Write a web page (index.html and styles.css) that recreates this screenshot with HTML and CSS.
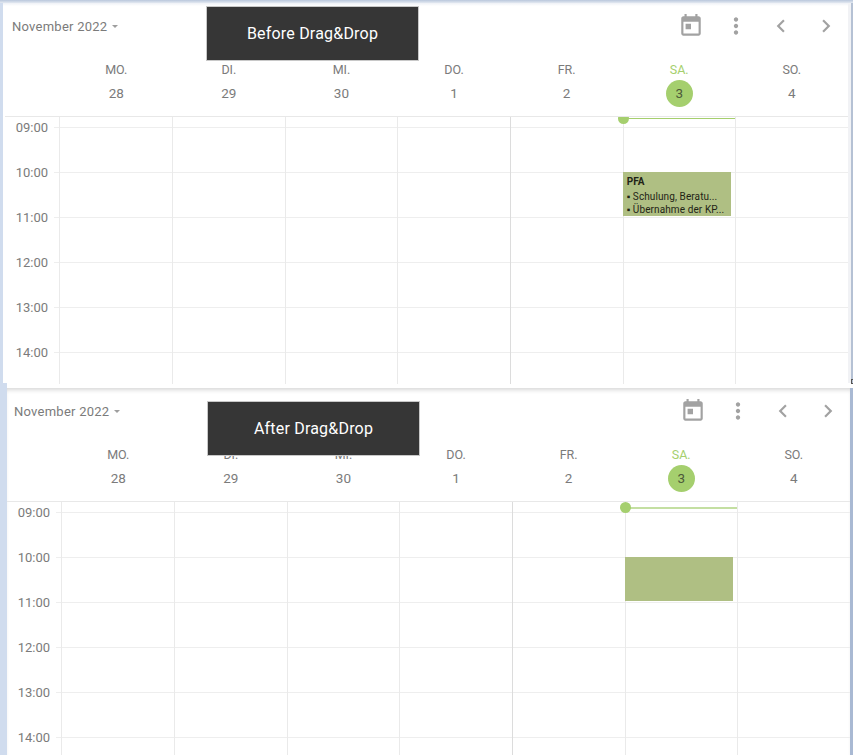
FILE: index.html
```html
<!DOCTYPE html>
<html lang="de">
<head>
    <meta charset="UTF-8">
    <meta name="viewport" content="width=device-width, initial-scale=1.0">
    <title>Kalender Drag&amp;Drop</title>
    <link rel="stylesheet" href="styles.css">
</head>
<body>
    <section class="cal cal-before">
        <div class="toolbar">
            <div class="month">November 2022<span class="caret"></span></div>
            <div class="tools">
                <button class="tool"><svg viewBox="0 0 24 24"><path d="M19 3h-1V1h-2v2H8V1H6v2H5c-1.11 0-1.99.9-1.99 2L3 19c0 1.1.89 2 2 2h14c1.1 0 2-.9 2-2V5c0-1.1-.9-2-2-2zm0 16H5V8h14v11zM7 10h5v5H7z"/></svg></button>
                <button class="tool"><svg viewBox="0 0 24 24"><path d="M12 8c1.1 0 2-.9 2-2s-.9-2-2-2-2 .9-2 2 .9 2 2 2zm0 2c-1.1 0-2 .9-2 2s.9 2 2 2 2-.9 2-2-.9-2-2-2zm0 6c-1.1 0-2 .9-2 2s.9 2 2 2 2-.9 2-2-.9-2-2-2z"/></svg></button>
                <button class="tool"><svg viewBox="0 0 24 24"><path d="M15.41 7.41L14 6l-6 6 6 6 1.41-1.41L10.83 12z"/></svg></button>
                <button class="tool"><svg viewBox="0 0 24 24"><path d="M8.59 16.59L10 18l6-6-6-6-1.41 1.41L13.17 12z"/></svg></button>
            </div>
        </div>
        <div class="banner">Before Drag&amp;Drop</div>
        <div class="head">
            <div class="head-day"><span class="name">MO.</span><span class="num">28</span></div>
            <div class="head-day"><span class="name">DI.</span><span class="num">29</span></div>
            <div class="head-day"><span class="name">MI.</span><span class="num">30</span></div>
            <div class="head-day"><span class="name">DO.</span><span class="num">1</span></div>
            <div class="head-day"><span class="name">FR.</span><span class="num">2</span></div>
            <div class="head-day today"><span class="name">SA.</span><span class="num">3</span></div>
            <div class="head-day"><span class="name">SO.</span><span class="num">4</span></div>
        </div>
        <div class="body">
            <div class="times">
                <span>09:00</span><span>10:00</span><span>11:00</span><span>12:00</span><span>13:00</span><span>14:00</span>
            </div>
            <div class="days">
                <div class="day"></div>
                <div class="day"></div>
                <div class="day"></div>
                <div class="day"></div>
                <div class="day day-dark"></div>
                <div class="day">
                    <div class="now"></div>
                    <div class="event">
                        <b>PFA</b>
                        <p>▪ Schulung, Beratu...</p>
                        <p>▪ Übernahme der KP...</p>
                    </div>
                </div>
                <div class="day"></div>
            </div>
        </div>
    </section>
    <div class="handle"></div>

    <section class="cal cal-after">
        <div class="toolbar">
            <div class="month">November 2022<span class="caret"></span></div>
            <div class="tools">
                <button class="tool"><svg viewBox="0 0 24 24"><path d="M19 3h-1V1h-2v2H8V1H6v2H5c-1.11 0-1.99.9-1.99 2L3 19c0 1.1.89 2 2 2h14c1.1 0 2-.9 2-2V5c0-1.1-.9-2-2-2zm0 16H5V8h14v11zM7 10h5v5H7z"/></svg></button>
                <button class="tool"><svg viewBox="0 0 24 24"><path d="M12 8c1.1 0 2-.9 2-2s-.9-2-2-2-2 .9-2 2 .9 2 2 2zm0 2c-1.1 0-2 .9-2 2s.9 2 2 2 2-.9 2-2-.9-2-2-2zm0 6c-1.1 0-2 .9-2 2s.9 2 2 2 2-.9 2-2-.9-2-2-2z"/></svg></button>
                <button class="tool"><svg viewBox="0 0 24 24"><path d="M15.41 7.41L14 6l-6 6 6 6 1.41-1.41L10.83 12z"/></svg></button>
                <button class="tool"><svg viewBox="0 0 24 24"><path d="M8.59 16.59L10 18l6-6-6-6-1.41 1.41L13.17 12z"/></svg></button>
            </div>
        </div>
        <div class="banner">After Drag&amp;Drop</div>
        <div class="head">
            <div class="head-day"><span class="name">MO.</span><span class="num">28</span></div>
            <div class="head-day"><span class="name">DI.</span><span class="num">29</span></div>
            <div class="head-day"><span class="name">MI.</span><span class="num">30</span></div>
            <div class="head-day"><span class="name">DO.</span><span class="num">1</span></div>
            <div class="head-day"><span class="name">FR.</span><span class="num">2</span></div>
            <div class="head-day today"><span class="name">SA.</span><span class="num">3</span></div>
            <div class="head-day"><span class="name">SO.</span><span class="num">4</span></div>
        </div>
        <div class="body">
            <div class="times">
                <span>09:00</span><span>10:00</span><span>11:00</span><span>12:00</span><span>13:00</span><span>14:00</span>
            </div>
            <div class="days">
                <div class="day"></div>
                <div class="day"></div>
                <div class="day"></div>
                <div class="day"></div>
                <div class="day day-dark"></div>
                <div class="day">
                    <div class="now"></div>
                    <div class="event"></div>
                </div>
                <div class="day"></div>
            </div>
        </div>
    </section>
</body>
</html>
```

FILE: styles.css
```css
html, body {
    margin: 0;
    height: 755px;
    overflow: hidden;
    font-family: Roboto, "Liberation Sans", sans-serif;
    color: #7b7b7b;
}
body {
    position: relative;
    box-sizing: border-box;
    padding-top: 3px;
    background: linear-gradient(#b9c7dc, #ffffff 5px);
}

/* blue window edges around the two screenshots */
.cal {
    position: relative;
    width: 843px;
    background: #fff;
}
.cal-before {
    height: 380px;
    padding-left: 2px;
    margin-left: 3px;
    box-shadow: -3px 0 0 #d0dcee, 3px 0 0 #f1f2f5, 5px 0 0 #b5c1d4;
    background: linear-gradient(#eef1f6, #ffffff 3px);
}
.cal-after {
    height: 367px;
    margin-top: 5px;
    margin-left: 7px;
    box-shadow: -7px 0 0 #d0dcee, 3px 0 0 #a9b9d3, inset 0 4px 4px -2px rgba(0, 0, 0, 0.16);
}
.cal-after:before {
    content: "";
    position: absolute;
    left: -7px;
    top: -5px;
    width: 7px;
    height: 5px;
    background: #d0dcee;
}

.toolbar {
    display: flex;
    align-items: center;
    justify-content: space-between;
    height: 46px;
}
.month {
    display: flex;
    align-items: center;
    padding-left: 7px;
    font-size: 13px;
    letter-spacing: 0.25px;
}
.caret {
    width: 0;
    height: 0;
    margin-left: 5px;
    border-left: 3px solid transparent;
    border-right: 3px solid transparent;
    border-top: 3px solid #9e9e9e;
}
.tools {
    display: flex;
}
.tool {
    display: flex;
    align-items: center;
    justify-content: center;
    width: 45px;
    height: 30px;
    padding: 0;
    border: 0;
    background: none;
}
.tool svg {
    width: 26px;
    height: 26px;
    fill: #a2a2a2;
}

.banner {
    position: absolute;
    box-sizing: border-box;
    width: 213px;
    height: 55px;
    display: flex;
    align-items: center;
    justify-content: center;
    background: #363636;
    border: 1px solid #c8c8c8;
    color: #fff;
    font-size: 16px;
    letter-spacing: 0.2px;
}
.cal-before .banner {
    left: 203px;
    top: 3px;
}
.cal-after .banner {
    left: 200px;
    top: 13px;
}

.head {
    display: flex;
    height: 67px;
    padding-left: 55px;
    box-sizing: border-box;
    padding-top: 11px;
}
.head-day {
    flex: 1;
    display: flex;
    flex-direction: column;
    align-items: center;
}
.name {
    height: 20px;
    line-height: 20px;
    font-size: 12.5px;
}
.num {
    width: 27px;
    height: 27px;
    line-height: 27px;
    border-radius: 50%;
    text-align: center;
    font-size: 13.5px;
}
.today .name {
    color: #a5cf6e;
}
.today .num {
    background: #a5cf6e;
    color: #4d5a3a;
}

.body {
    display: flex;
    height: 267px;
    overflow: hidden;
    border-top: 1px solid #e8e8e8;
}
.cal-after .body {
    height: 254px;
}
.times {
    display: flex;
    flex-direction: column;
    gap: 27px;
    box-sizing: border-box;
    width: 49px;
    padding: 2px 6px 0 0;
    text-align: right;
    font-size: 13px;
    line-height: 18px;
}
.days {
    flex: 1;
    display: flex;
    padding-left: 5.2px;
    background-image: linear-gradient(#eeeeee 1px, transparent 1px);
    background-size: 100% 45px;
    background-position: 0 10px;
}
.day {
    position: relative;
    flex: 1;
    border-left: 1px solid #eaeaea;
}
.day-dark {
    border-left-color: #dcdcdc;
}

/* current time marker */
.now {
    position: absolute;
    left: 0;
    right: 0;
    height: 1px;
    background: #a5cf6e;
}
.now:before {
    content: "";
    position: absolute;
    left: -6px;
    top: -5px;
    width: 11px;
    height: 11px;
    border-radius: 50%;
    background: #a5cf6e;
}
.cal-before .now {
    top: 1px;
}
.cal-after .now {
    top: 5px;
    height: 2px;
    background: #c4dfa2;
}

.event {
    position: absolute;
    left: -1px;
    top: 55px;
    box-sizing: border-box;
    width: 108px;
    height: 44px;
    padding: 3px 0 0 4px;
    overflow: hidden;
    background: #afbf83;
    color: #1f2416;
    font-size: 10px;
    letter-spacing: 0.1px;
    white-space: nowrap;
}
.event b {
    display: block;
    height: 15px;
    line-height: 13px;
}
.event p {
    margin: 0;
    height: 13px;
    line-height: 13px;
}

.handle {
    position: absolute;
    left: 851px;
    top: 379px;
    width: 2px;
    height: 3px;
    border: 1px solid #555;
    border-right: 0;
}
```
